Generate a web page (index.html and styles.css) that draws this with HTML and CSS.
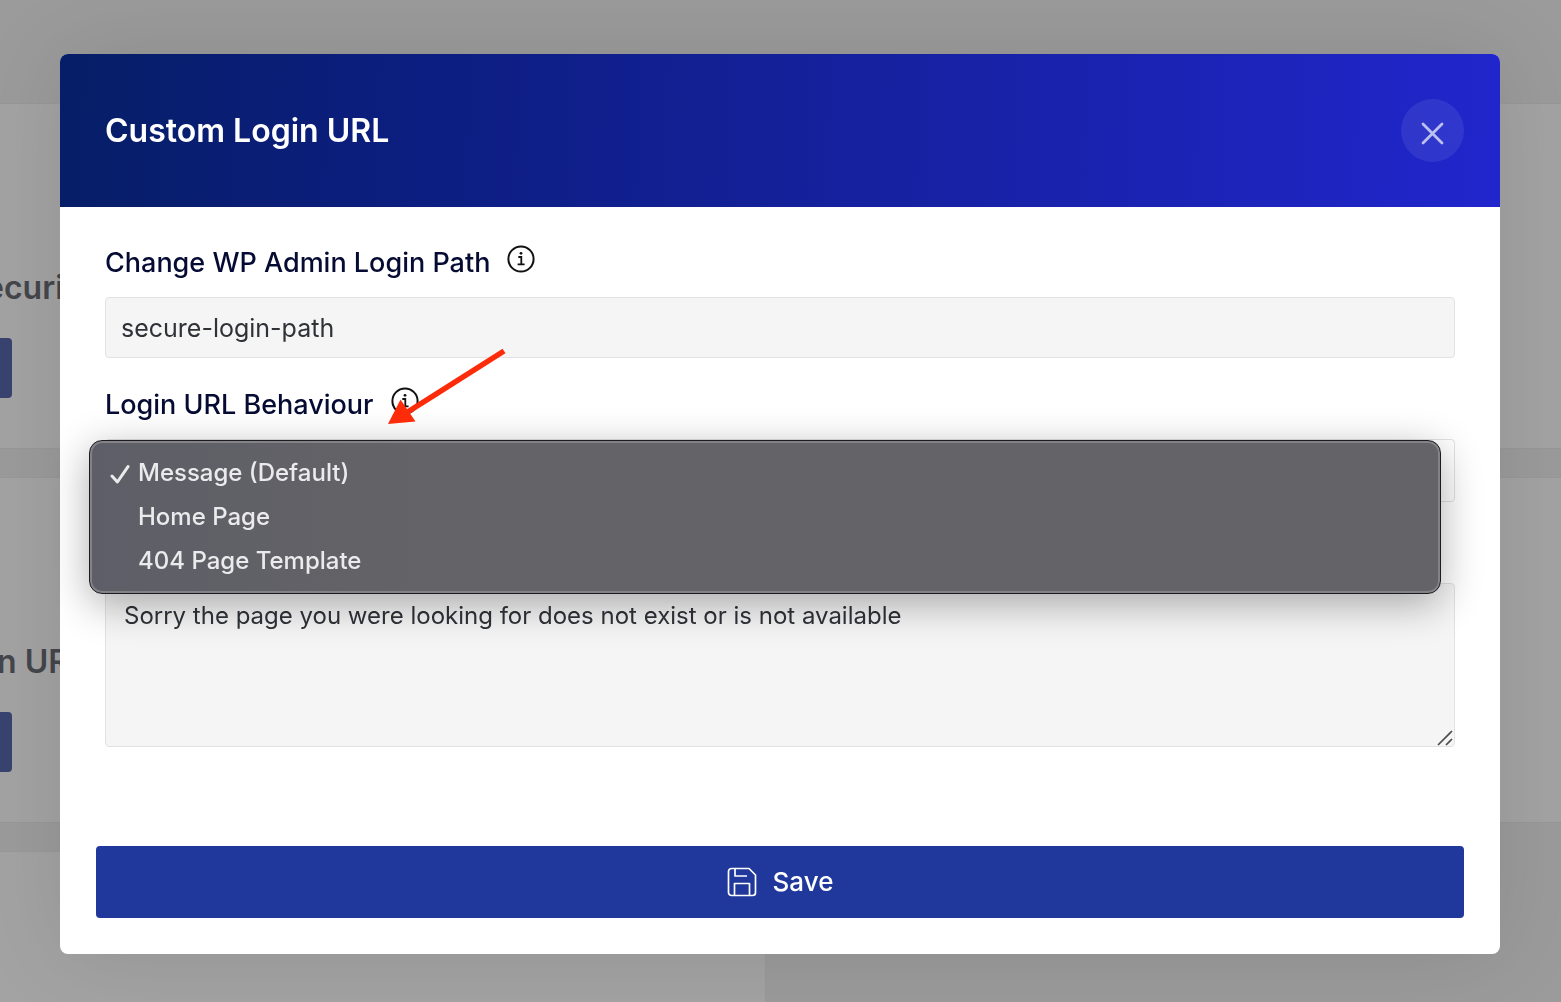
FILE: index.html
```html
<!DOCTYPE html>
<html lang="en">
<head>
<meta charset="utf-8">
<title>Custom Login URL</title>
<link rel="stylesheet" href="styles.css">
</head>
<body>
<div class="page">
  <section class="card card-security">
    <h3 class="card-title">ecuri</h3>
    <span class="card-action"></span>
  </section>
  <section class="card">
    <h3 class="card-title">n UR</h3>
    <span class="card-action"></span>
  </section>
  <section class="card card-half"></section>
</div>

<div class="overlay">
  <form class="modal" role="dialog" aria-labelledby="modal-title">
    <header class="modal-header">
      <h2 class="modal-title" id="modal-title">Custom Login URL</h2>
      <button class="close" type="button" aria-label="Close">
        <svg width="24" height="24" viewBox="0 0 24 24" fill="none" stroke="currentColor" stroke-width="2.8" stroke-linecap="round"><path d="M2 2l19 19M21 2l-19 19"/></svg>
      </button>
    </header>

    <div class="modal-body">
      <div class="field">
        <div class="label-row">
          <label class="label" for="path">Change WP Admin Login Path</label>
          <svg class="info" width="28" height="28" viewBox="0 0 28 28" fill="none" stroke="currentColor" stroke-width="2"><circle cx="14" cy="14" r="12.6"/><path d="M11.3 12h3v7.2M10.6 19.4h7" stroke-width="1.8"/><circle cx="14" cy="8.3" r="1.4" fill="currentColor" stroke="none"/></svg>
        </div>
        <input class="control" id="path" type="text" value="secure-login-path">
      </div>

      <div class="field field-select">
        <div class="label-row">
          <label class="label" for="behaviour">Login URL Behaviour</label>
          <svg class="info" width="28" height="28" viewBox="0 0 28 28" fill="none" stroke="currentColor" stroke-width="2"><circle cx="14" cy="14" r="12.6"/><path d="M11.3 12h3v7.2M10.6 19.4h7" stroke-width="1.8"/><circle cx="14" cy="8.3" r="1.4" fill="currentColor" stroke="none"/></svg>
        </div>
        <select class="control select" id="behaviour"></select>
        <ul class="menu" role="listbox" aria-label="Login URL Behaviour">
          <li class="option" role="option" aria-selected="true"><svg class="check" width="20" height="20" viewBox="0 0 20 20" fill="none" stroke="currentColor" stroke-width="3" stroke-linecap="round" stroke-linejoin="round"><path d="M2 12l5.400 6L18 2.600"/></svg>Message (Default)</li>
          <li class="option" role="option">Home Page</li>
          <li class="option" role="option">404 Page Template</li>
        </ul>
        <svg class="arrow" width="120" height="78" viewBox="0 0 120 78"><path d="M118 3L20 65" stroke="#fc2c0a" stroke-width="5.5"/><path d="M2 76L14.500 51.500L29.500 73.500z" fill="#fc2c0a"/></svg>
      </div>

      <div class="message">
        <textarea class="control textarea" aria-label="Message">Sorry the page you were looking for does not exist or is not available</textarea>
        <svg class="grip" width="16" height="16" viewBox="0 0 16 16" stroke="#4c4c4f" stroke-width="1.7"><path d="M1 15L15 1M9 15l6-6"/></svg>
      </div>
    </div>

    <footer class="modal-footer">
      <button class="save" type="submit">
        <svg width="30" height="30" viewBox="0 0 30 30" fill="none" stroke="currentColor" stroke-width="1.7" stroke-linejoin="round"><path d="M4.500 1.500h17.500l6.500 6.500v17.500a3 3 0 0 1-3 3h-21a3 3 0 0 1-3-3v-21a3 3 0 0 1 3-3zM8 1.500v7.500h12M7.500 28.500V16.500h15v12"/></svg>
        Save
      </button>
    </footer>
  </form>
</div>
</body>
</html>
```
FILE: styles.css
```css
* { box-sizing: border-box; }

body {
  margin: 0;
  min-height: 100vh;
  overflow: hidden;
  background: #9b9b9b;
  font-family: Inter, "Liberation Sans", sans-serif;
}

.page {
  display: flex;
  flex-direction: column;
  gap: 30px;
  height: 100vh;
  padding-top: 104px;
  overflow: hidden;
}

.card {
  flex: none;
  height: 344px;
  padding-top: 162px;
  background: #a3a3a3;
  box-shadow: 0 0 0 1px #989898;
}

.card-half { width: 49%; }

.card-title {
  margin: 0 0 28px -3px;
  color: #44464c;
  font-size: 32px;
  font-weight: 600;
  line-height: 44px;
}

.card-security .card-title { margin-left: -15px; }

.card-action {
  display: block;
  width: 12px;
  height: 60px;
  border-radius: 0 4px 4px 0;
  background: #38446f;
}

.overlay {
  position: fixed;
  inset: 0;
  padding: 54px 61px 48px 60px;
}

.modal {
  border-radius: 8px;
  background: #fff;
  box-shadow: 0 0 90px rgba(0, 0, 0, 0.1);
}

.modal-header {
  display: flex;
  align-items: center;
  justify-content: space-between;
  padding: 45px 36px 45px 45px;
  border-radius: 8px 8px 0 0;
  background: linear-gradient(92deg, #061e67, #0c1e80 25%, #1822a8 65%, #2026cc);
}

.modal-title {
  margin: 0;
  color: #fff;
  font-size: 32px;
  font-weight: 600;
  line-height: 40px;
}

.close {
  display: flex;
  align-items: center;
  justify-content: center;
  width: 63px;
  height: 63px;
  padding: 6px 0 0;
  border: 0;
  border-radius: 50%;
  background: rgba(255, 255, 255, 0.08);
  color: #bcc0ee;
}

.modal-body { padding: 40px 45px 0; }

.field { margin-bottom: 31px; }

.field-select {
  position: relative;
  z-index: 1;
  margin-bottom: 81px;
}

.label-row {
  display: flex;
  gap: 17px;
  height: 32px;
  margin-bottom: 18px;
}

.label {
  color: #050b33;
  font-size: 27px;
  font-weight: 500;
  line-height: 32px;
}

.info {
  margin-top: -2px;
  color: #111;
}

.control {
  display: block;
  width: 100%;
  height: 61px;
  padding: 0 15px;
  border: 1px solid #e2e2e2;
  border-radius: 4px;
  background: #f5f5f5;
  color: #2f3237;
  font: 400 25px/36px Inter, "Liberation Sans", sans-serif;
  outline: 0;
}

.select {
  height: 63px;
  background: #fff;
  appearance: none;
}

.menu {
  position: absolute;
  top: 51px;
  left: -16px;
  right: 14px;
  margin: 0;
  padding: 10px 0 10px 48px;
  border: 1px solid #1c1c20;
  border-radius: 13px;
  background: linear-gradient(90deg, #5d5e67, #646367 25%, #646367);
  box-shadow: inset 0 0 0 2px #838387, 0 10px 40px rgba(0, 0, 0, 0.32);
  list-style: none;
}

.option {
  position: relative;
  color: #ebebed;
  font-size: 24px;
  font-weight: 500;
  line-height: 44px;
}

.check {
  position: absolute;
  top: 13px;
  left: -28px;
}

.arrow {
  position: absolute;
  top: -41px;
  left: 281px;
}

.message { position: relative; }

.textarea {
  height: 164px;
  padding: 14px 18px;
  font-size: 24px;
  resize: none;
}

.grip {
  position: absolute;
  right: 2px;
  bottom: 1px;
}

.modal-footer { padding: 99px 36px 36px; }

.save {
  display: flex;
  align-items: center;
  justify-content: center;
  gap: 16px;
  width: 100%;
  height: 72px;
  padding: 0;
  border: 0;
  border-radius: 4px;
  background: #20379b;
  color: #fff;
  font: 500 26px/32px Inter, "Liberation Sans", sans-serif;
}
```
